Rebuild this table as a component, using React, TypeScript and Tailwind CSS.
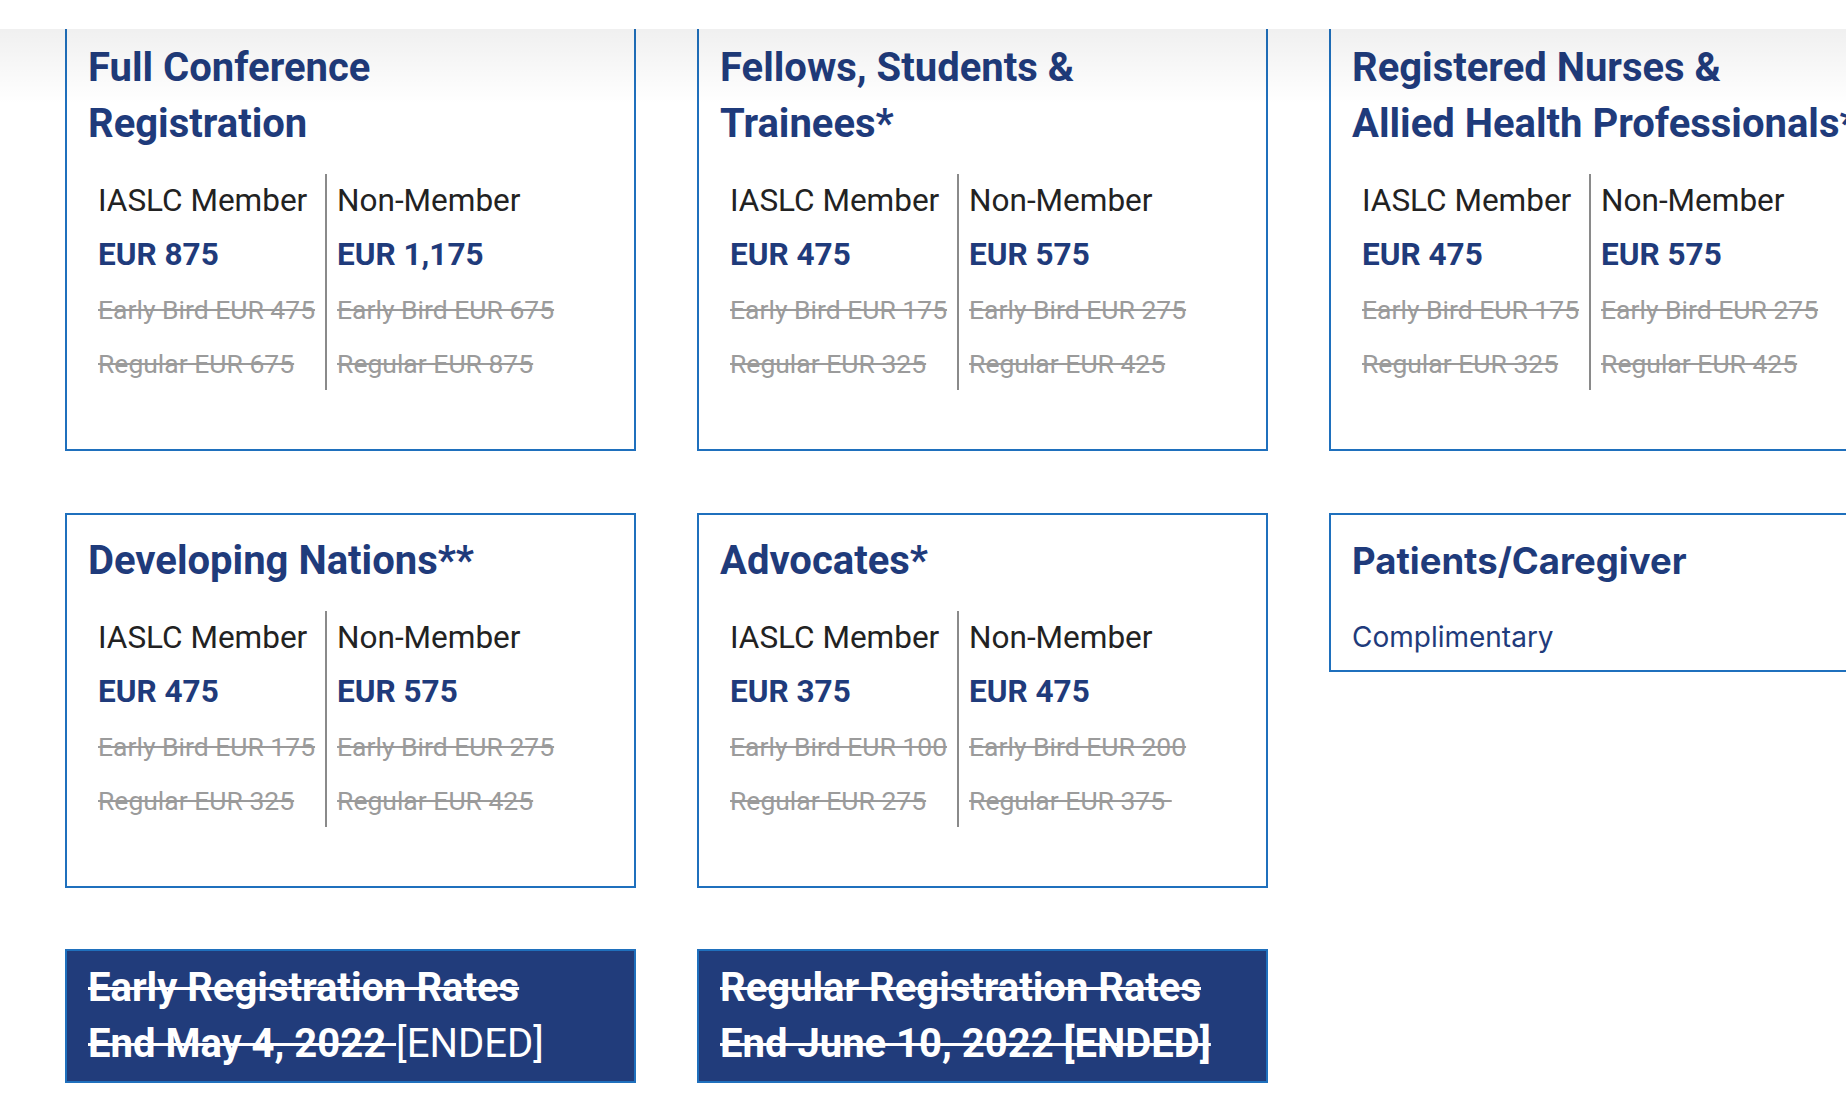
import React from "react";

type Card = {
  title: string[];
  member: string;
  nonMember: string;
  early: [string, string];
  regular: [string, string];
};

const cards: Card[] = [
  {
    title: ["Full Conference", "Registration"],
    member: "EUR 875",
    nonMember: "EUR 1,175",
    early: ["Early Bird EUR 475", "Early Bird EUR 675"],
    regular: ["Regular EUR 675", "Regular EUR 875"],
  },
  {
    title: ["Fellows, Students &", "Trainees*"],
    member: "EUR 475",
    nonMember: "EUR 575",
    early: ["Early Bird EUR 175", "Early Bird EUR 275"],
    regular: ["Regular EUR 325", "Regular EUR 425"],
  },
  {
    title: ["Registered Nurses &", "Allied Health Professionals*"],
    member: "EUR 475",
    nonMember: "EUR 575",
    early: ["Early Bird EUR 175", "Early Bird EUR 275"],
    regular: ["Regular EUR 325", "Regular EUR 425"],
  },
  {
    title: ["Developing Nations**"],
    member: "EUR 475",
    nonMember: "EUR 575",
    early: ["Early Bird EUR 175", "Early Bird EUR 275"],
    regular: ["Regular EUR 325", "Regular EUR 425"],
  },
  {
    title: ["Advocates*"],
    member: "EUR 375",
    nonMember: "EUR 475",
    early: ["Early Bird EUR 100", "Early Bird EUR 200"],
    regular: ["Regular EUR 275", "Regular EUR 375\u00a0"],
  },
];

function PriceColumn({
  label,
  price,
  early,
  regular,
  divider,
}: {
  label: string;
  price: string;
  early: string;
  regular: string;
  divider?: boolean;
}) {
  return (
    <div
      className={`flex flex-col px-[10px] ${
        divider ? "border-r-2 border-[#8a8a8a]" : ""
      }`}
    >
      <div className="h-[54px] leading-[54px] text-[31.5px] text-[#222] whitespace-nowrap">
        {label}
      </div>
      <div className="h-[54px] leading-[54px] text-[31.5px] font-bold text-[#1f3b7b] whitespace-nowrap">
        {price}
      </div>
      <div className="h-[54px] leading-[56px] text-[26.5px] text-[#9b9b9b] line-through whitespace-nowrap">
        {early}
      </div>
      <div className="h-[54px] leading-[56px] text-[26.5px] text-[#9b9b9b] line-through whitespace-nowrap">
        {regular}
      </div>
    </div>
  );
}

function RateCard({ card }: { card: Card }) {
  return (
    <div className="border-2 border-[#1f70bd] pt-[18px] px-[21px] pb-[59px]">
      <h3 className="text-[40px] leading-[56px] font-bold text-[#1f3b7b] mb-[22px] whitespace-nowrap">
        {card.title.map((line, i) => (
          <React.Fragment key={i}>
            {i > 0 && <br />}
            {line}
          </React.Fragment>
        ))}
      </h3>
      <div className="flex">
        <PriceColumn
          label="IASLC Member"
          price={card.member}
          early={card.early[0]}
          regular={card.regular[0]}
          divider
        />
        <PriceColumn
          label="Non-Member"
          price={card.nonMember}
          early={card.early[1]}
          regular={card.regular[1]}
        />
      </div>
    </div>
  );
}

export default function App() {
  return (
    <div className="relative w-[1846px] h-[1098px] overflow-hidden bg-white font-['Roboto',sans-serif]">
      <div className="grid grid-cols-[571px_571px_571px] gap-x-[61px] gap-y-[62px] items-start pl-[65px] pt-[20px]">
        {cards.slice(0, 3).map((c) => (
          <RateCard key={c.title[0]} card={c} />
        ))}
        {cards.slice(3).map((c) => (
          <RateCard key={c.title[0]} card={c} />
        ))}

        <div className="border-2 border-[#1f70bd] pt-[18px] px-[21px] pb-[15px] font-['Inter',sans-serif]">
          <h3 className="text-[36.5px] leading-[56px] font-bold text-[#1f3b7b] whitespace-nowrap">
            Patients/Caregiver
          </h3>
          <p className="mt-[30px] text-[28px] leading-[36px] text-[#1f3b7b]">
            Complimentary
          </p>
        </div>

        <div className="-mt-[1px] border-2 border-[#1f70bd] bg-[#213c7b] pt-[9px] px-[21px] pb-[9px] text-white text-[40px] leading-[56px] font-bold">
          <div className="line-through decoration-[3px] whitespace-nowrap">
            Early Registration Rates
          </div>
          <div className="whitespace-nowrap">
            <span className="line-through decoration-[3px]">End May 4, 2022 </span>
            <span className="font-normal">[ENDED]</span>
          </div>
        </div>

        <div className="-mt-[1px] border-2 border-[#1f70bd] bg-[#213c7b] pt-[9px] px-[21px] pb-[9px] text-white text-[40px] leading-[56px] font-bold">
          <div className="line-through decoration-[3px] whitespace-nowrap">
            Regular Registration Rates
          </div>
          <div className="line-through decoration-[3px] whitespace-nowrap">
            End June 10, 2022 [ENDED]
          </div>
        </div>
      </div>

      {/* sticky header strip with its soft shadow */}
      <div className="absolute top-0 left-0 right-0 h-[29px] bg-white" />
      <div className="pointer-events-none absolute top-[29px] left-0 right-0 h-[75px] bg-gradient-to-b from-black/[0.06] to-transparent" />
    </div>
  );
}
